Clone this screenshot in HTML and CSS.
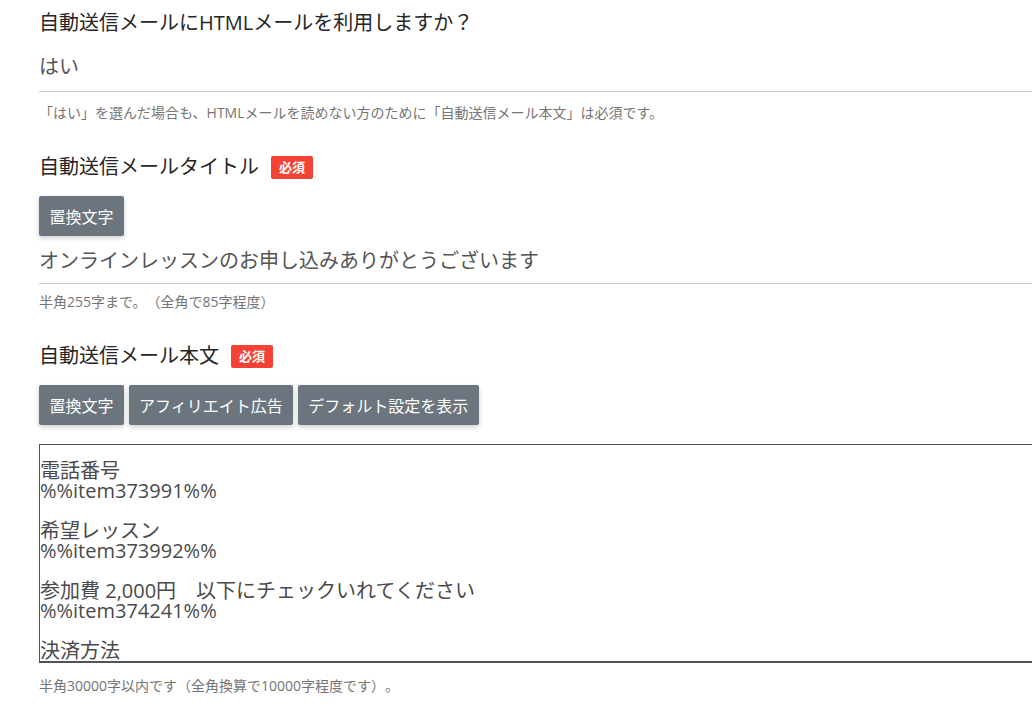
FILE: index.html
```html
<!DOCTYPE html>
<html lang="ja">
<head>
    <meta charset="UTF-8">
    <meta name="viewport" content="width=device-width, initial-scale=1.0">
    <title>自動送信メール設定</title>
    <link rel="stylesheet" href="styles.css">
</head>
<body>
    <div class="form">
        <!-- HTMLメール -->
        <div class="field field-first">
            <div class="label">自動送信メールにHTMLメールを利用しますか？</div>
            <div class="select-value">はい</div>
            <p class="help">「はい」を選んだ場合も、HTMLメールを読めない方のために「自動送信メール本文」は必須です。</p>
        </div>

        <!-- タイトル -->
        <div class="field">
            <div class="label">自動送信メールタイトル<span class="badge">必須</span></div>
            <div class="buttons">
                <button class="btn" type="button">置換文字</button>
            </div>
            <input class="text-input" type="text" value="オンラインレッスンのお申し込みありがとうございます">
            <p class="help help-tight">半角255字まで。（全角で85字程度）</p>
        </div>

        <!-- 本文 -->
        <div class="field">
            <div class="label">自動送信メール本文<span class="badge">必須</span></div>
            <div class="buttons">
                <button class="btn" type="button">置換文字</button>
                <button class="btn" type="button">アフィリエイト広告</button>
                <button class="btn" type="button">デフォルト設定を表示</button>
            </div>
            <textarea class="body-text">電話番号
%%item373991%%

希望レッスン
%%item373992%%

参加費 2,000円　以下にチェックいれてください
%%item374241%%

決済方法
%%item375068%%

お名前
%%item373990%%</textarea>
            <p class="help help-bottom">半角30000字以内です（全角換算で10000字程度です）。</p>
        </div>
    </div>
</body>
</html>
```

FILE: styles.css
```css
body {
    margin: 0;
    font-family: "Open Sans", "Noto Sans CJK JP", sans-serif;
    color: #262626;
    background: #fff;
    text-spacing-trim: space-all;
}
.form {
    padding-left: 39px;
    overflow: hidden;
    height: 705px;
}
.field {
    width: 1100px;
    margin-top: 33px;
}
.field-first {
    margin-top: 11px;
}
.label {
    display: flex;
    align-items: center;
    font-size: 20px;
    line-height: 24px;
    color: #262626;
}
.badge {
    display: inline-block;
    margin-left: 12px;
    padding: 0 8px;
    height: 23px;
    line-height: 23px;
    font-size: 13px;
    font-weight: bold;
    color: #fff;
    background: #f44336;
    border-radius: 2px;
}
.select-value {
    padding: 20px 0 12px;
    font-size: 20px;
    line-height: 24px;
    color: #555;
    border-bottom: 1px solid #c8c8c8;
}
.help {
    margin: 12px 0 0;
    font-size: 14px;
    line-height: 18px;
    color: #757575;
}
.help-tight {
    margin-top: 9px;
}
.help-bottom {
    margin-top: 14px;
}
.buttons {
    display: flex;
    gap: 4px;
    margin-top: 17px;
}
.btn {
    height: 40px;
    padding: 0 10.5px;
    font-family: inherit;
    font-size: 16px;
    color: #fff;
    background: #6c757d;
    border: none;
    border-radius: 2px;
    box-shadow: 0 2px 5px rgba(0, 0, 0, 0.2);
}
.btn + .btn {
    margin-left: 0.5px;
}
.text-input {
    display: block;
    width: 100%;
    box-sizing: border-box;
    margin: 0;
    padding: 13px 0 10px;
    font-family: inherit;
    font-size: 20px;
    line-height: 24px;
    color: #555;
    border: none;
    border-bottom: 1px solid #c8c8c8;
    outline: none;
}
.body-text {
    display: block;
    width: 100%;
    height: 219px;
    box-sizing: border-box;
    margin-top: 19px;
    padding: 16px 0 0;
    font-family: inherit;
    font-size: 20px;
    line-height: 20px;
    color: #4a4a4a;
    border: 1px solid #4f5359;
    border-bottom-width: 2px;
    resize: none;
    overflow: hidden;
    text-spacing-trim: space-all;
}
```
